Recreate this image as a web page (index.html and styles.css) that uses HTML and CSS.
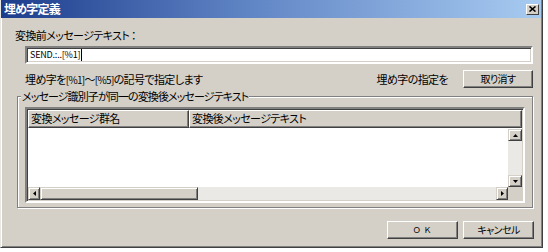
FILE: index.html
```html
<!DOCTYPE html>
<html lang="ja">
<head>
    <meta charset="UTF-8">
    <title>埋め字定義</title>
    <link rel="stylesheet" href="styles.css">
</head>
<body>
  <div class="dialog">
    <div class="titlebar">
      <span class="title">埋め字定義</span>
      <div class="close-btn">
        <svg width="7" height="6" viewBox="0 0 7 6"><path d="M0.5 0.5 L6.5 5.5 M6.5 0.5 L0.5 5.5" stroke="#000" stroke-width="1.6"/></svg>
      </div>
    </div>

    <div class="content">
      <div class="label">変換前メッセージテキスト ：</div>
      <div class="textbox"><span class="value">SEND.:..[%1]</span><span class="caret"></span></div>

      <div class="hint-row">
        <span>埋め字を<span class="mark">[%1]</span>～<span class="mark">[%5]</span>の記号で指定します</span>
        <span class="right-hint">埋め字の指定を</span>
        <div class="btn small">取り消す</div>
      </div>

      <fieldset class="group">
        <legend>メッセージ識別子が同一の変換後メッセージテキスト</legend>
        <div class="listview">
          <div class="lv-header">
            <div class="lv-col col1">変換メッセージ群名</div>
            <div class="lv-col col2">変換後メッセージテキスト</div>
          </div>
          <div class="lv-main">
            <div class="lv-rows"></div>
            <div class="vscroll">
              <div class="sb-btn"><svg width="5" height="3" viewBox="0 0 5 3"><path d="M2.5 0 L5 3 L0 3 Z" fill="#000"/></svg></div>
              <div class="sb-track"></div>
              <div class="sb-btn"><svg width="5" height="3" viewBox="0 0 5 3"><path d="M0 0 L5 0 L2.5 3 Z" fill="#000"/></svg></div>
            </div>
          </div>
          <div class="hscroll">
            <div class="sb-btn h"><svg width="3" height="5" viewBox="0 0 3 5"><path d="M3 0 L3 5 L0 2.5 Z" fill="#000"/></svg></div>
            <div class="sb-thumb"></div>
            <div class="sb-track"></div>
            <div class="sb-btn h"><svg width="3" height="5" viewBox="0 0 3 5"><path d="M0 0 L3 2.5 L0 5 Z" fill="#000"/></svg></div>
            <div class="sb-corner"></div>
          </div>
        </div>
      </fieldset>

      <div class="button-row">
        <div class="btn wide">Ｏ Ｋ</div>
        <div class="btn">キャンセル</div>
      </div>
    </div>
  </div>
</body>
</html>
```

FILE: styles.css
```css
body {
    margin: 0;
    background-color: #ffffff;
    font-family: 'Noto Sans CJK JP', 'Liberation Sans', sans-serif;
    font-feature-settings: "palt";
    font-size: 11px;
    letter-spacing: -0.6px;
    color: #000000;
}

/* window frame */
.dialog {
    box-sizing: border-box;
    width: 543px;
    height: 248px;
    background-color: #d4d0c8;
    border-left: 1px solid #e8e6e2;
    border-right: 1px solid #404040;
    border-bottom: 1px solid #404040;
    box-shadow: inset 1px 0 #ffffff, inset -1px -1px #808080;
    display: flex;
    flex-direction: column;
}

.titlebar {
    height: 18px;
    margin-right: 1px;
    background: linear-gradient(to right, #1c3c8c, #5f84c4 45%, #a8cbf1);
    display: flex;
    align-items: center;
    justify-content: space-between;
    padding: 0 2px 0 3px;
}

.title {
    color: #ffffff;
    font-weight: bold;
    font-size: 12px;
    line-height: 14px;
    letter-spacing: -0.8px;
}

.close-btn {
    box-sizing: border-box;
    width: 13px;
    height: 11px;
    background-color: #d4d0c8;
    border: 1px solid;
    border-color: #ffffff #404040 #404040 #ffffff;
    display: flex;
    align-items: center;
    justify-content: center;
}

.content {
    display: flex;
    flex-direction: column;
}

.label {
    margin: 10px 0 0 14px;
    line-height: 14px;
}

/* sunken edit box */
.textbox {
    box-sizing: border-box;
    margin: 4px 0 0 24px;
    width: 508px;
    height: 18px;
    background-color: #ffffff;
    border: 2px solid;
    border-color: #808080 #ffffff #ffffff #808080;
    box-shadow: inset 1px 1px #404040, inset -1px -1px #d4d0c8;
    display: flex;
    align-items: center;
    padding-left: 3px;
}

.textbox .value {
    font-size: 9px;
    line-height: 12px;
    letter-spacing: -0.2px;
}

.caret {
    width: 1px;
    height: 12px;
    background-color: #000000;
    margin-left: 1px;
}

.hint-row {
    margin: 6px 0 0 24px;
    width: 508px;
    height: 18px;
    display: flex;
    align-items: center;
}

.mark {
    font-size: 10px;
    letter-spacing: -0.7px;
}

.right-hint {
    margin-left: auto;
    margin-right: 15px;
}

/* buttons */
.btn {
    box-sizing: border-box;
    width: 71px;
    height: 18px;
    background-color: #d4d0c8;
    border: 1px solid;
    border-color: #ffffff #404040 #404040 #ffffff;
    box-shadow: inset -1px -1px #808080;
    font-size: 10px;
    line-height: 14px;
    display: flex;
    align-items: center;
    justify-content: center;
}

.btn.small {
    width: 70px;
}

.btn.wide {
    font-size: 8px;
    letter-spacing: 1px;
}

/* group box */
.group {
    margin: 1px 0 0 16px;
    width: 516px;
    box-sizing: border-box;
    padding: 4px 0 4px 7px;
    border: 1px solid #808080;
    box-shadow: inset 1px 1px #ffffff, 1px 1px #ffffff;
}

.group legend {
    margin-left: -4px;
    padding: 0 1px;
    line-height: 14px;
    letter-spacing: -0.9px;
    background-color: #d4d0c8;
}

.listview {
    box-sizing: border-box;
    width: 500px;
    height: 96px;
    background-color: #ffffff;
    border: 2px solid;
    border-color: #808080 #ffffff #ffffff #808080;
    box-shadow: inset 1px 1px #404040, inset -1px -1px #d4d0c8;
    padding: 1px;
    display: flex;
    flex-direction: column;
}

.lv-header {
    display: flex;
    height: 18px;
}

.lv-col {
    box-sizing: border-box;
    background-color: #d4d0c8;
    border: 1px solid;
    border-color: #ffffff #404040 #404040 #ffffff;
    box-shadow: inset -1px -1px #808080;
    padding-left: 2px;
    line-height: 15px;
}

.col1 {
    width: 161px;
}

.col2 {
    flex: 1;
}

.lv-main {
    flex: 1;
    display: flex;
    padding-top: 1px;
}

.lv-rows {
    flex: 1;
}

/* scroll bars */
.vscroll {
    width: 14px;
    display: flex;
    flex-direction: column;
}

.sb-btn {
    box-sizing: border-box;
    width: 14px;
    height: 12px;
    background-color: #d4d0c8;
    border: 1px solid;
    border-color: #d4d0c8 #404040 #404040 #d4d0c8;
    box-shadow: inset 1px 1px #ffffff, inset -1px -1px #808080;
    display: flex;
    align-items: center;
    justify-content: center;
}

.sb-btn.h {
    width: 12px;
    height: 13px;
}

.sb-track {
    flex: 1;
    background-color: #ebe9e5;
}

.hscroll {
    display: flex;
    height: 13px;
}

.sb-thumb {
    box-sizing: border-box;
    width: 158px;
    background-color: #d4d0c8;
    border: 1px solid;
    border-color: #d4d0c8 #404040 #404040 #d4d0c8;
    box-shadow: inset 1px 1px #ffffff, inset -1px -1px #808080;
}

.sb-corner {
    width: 14px;
    background-color: #d4d0c8;
}

.button-row {
    margin: 13px 0 0 24px;
    width: 509px;
    display: flex;
    justify-content: flex-end;
    gap: 5px;
}
```
